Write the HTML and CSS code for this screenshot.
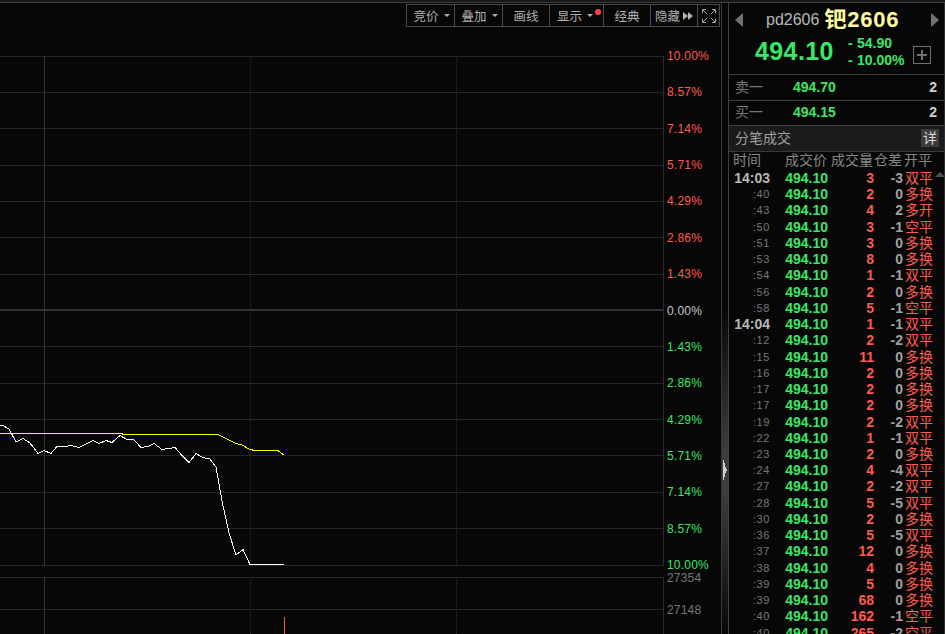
FILE: index.html
```html
<!DOCTYPE html>
<html lang="zh-CN">
<head>
  <meta charset="utf-8">
  <title>钯2606</title>
  <link rel="stylesheet" href="styles.css">
</head>
<body>

  <div class="topbar"></div>

  <div class="main">
    <div class="chart">
      <div class="toolbar">
        <div class="tool w48">竞价<i class="down"></i></div>
        <div class="tool w48">叠加<i class="down"></i></div>
        <div class="tool w47">画线</div>
        <div class="tool w54 show">显示<i class="down"></i><i class="dot"></i></div>
        <div class="tool w47">经典</div>
        <div class="tool w47 hide">隐藏<svg width="10" height="8"><path d="M0 0L5 4L0 8ZM5 0L10 4L5 8Z" fill="#b4b4b4"/></svg></div>
        <div class="tool w22">
          <svg width="14" height="14" fill="none" stroke="#a8a8a8">
            <path d="M.5 4V.5H4M10 .5H13.5V4M13.5 10V13.5H10M4 13.5H.5V10M1 1L5 5M13 1L9 5M13 13L9 9M1 13L5 9"/>
          </svg>
        </div>
      </div>

      <div class="plot">
        <svg id="grid" width="664" height="578" viewBox="0 56 664 578" shape-rendering="crispEdges"></svg>
        <div class="axis">
          <div class="price-axis" id="prices"></div>
          <div class="volume-axis">
            <div>27354</div>
            <div>27148</div>
          </div>
        </div>
      </div>
    </div>

    <div class="splitter">
      <svg width="4" height="20" shape-rendering="crispEdges"><path d="M0 0H1V3H2V7H3V9H4V11H3V13H2V17H1V20H0Z" fill="#d0d0d0"/></svg>
    </div>

    <div class="panel">
      <div class="quote">
        <div class="title">
          <i class="prev"></i>
          <span class="code">pd2606</span>
          <span class="name">钯2606</span>
          <i class="next"></i>
        </div>
        <div class="last">
          <span class="price">494.10</span>
          <div class="change">
            <div><b>-</b>54.90</div>
            <div><b>-</b>10.00%</div>
          </div>
          <div class="add"></div>
        </div>
      </div>
      <div class="order"><span>卖一</span><b class="green">494.70</b><b class="qty">2</b></div>
      <div class="order second"><span>买一</span><b class="green">494.15</b><b class="qty">2</b></div>
      <div class="tab"><span>分笔成交</span><span class="detail">详</span></div>
      <div class="head"><span>时间</span><span>成交价</span><span>成交量</span><span>仓差</span><span>开平</span><i class="up"></i></div>
      <div id="ticks"></div>
    </div>
  </div>

  <script src="script.js"></script>
</body>
</html>
```
FILE: styles.css
```css
* { box-sizing: border-box; margin: 0; padding: 0; }

body {
  width: 945px;
  height: 634px;
  overflow: hidden;
  background: #070707;
  color: #a0a0a0;
  font-family: "Liberation Sans", "Noto Sans CJK SC", sans-serif;
  font-size: 14px;
}

i, svg { display: block; flex: none; }

.topbar {
  height: 3px;
  background: #181818;
  border-bottom: 1px solid #404040;
}

.main {
  display: grid;
  grid-template-columns: 721px 8px 216px;
  height: 631px;
}

/* chart */
.chart { overflow: hidden; }

.toolbar {
  display: flex;
  width: 314px;
  height: 23px;
  margin: 1px 0 29px 406px;
  border: 1px solid #4a4a4a;
}

.tool {
  display: flex;
  align-items: center;
  justify-content: center;
  flex: none;
  gap: 5px;
  border-right: 1px solid #4a4a4a;
  color: #b0b0b0;
  font-size: 12.5px;
  position: relative;
}

.tool:last-child { border-right: 0; }
.w48 { width: 48px; padding-left: 2px; }
.w47 { width: 47px; }
.w54 { width: 54px; }
.w22 { width: 21px; }
.hide { gap: 3px; }
.show { padding-right: 3px; }

.down {
  border: 3px solid transparent;
  border-top-color: #b0b0b0;
  border-bottom: 0;
  margin-top: -1px;
}

.dot {
  position: absolute;
  right: 2px;
  top: 4px;
  width: 6px;
  height: 6px;
  border-radius: 50%;
  background: #ff4040;
}

.plot { display: flex; }

.axis {
  padding-left: 3px;
  font-size: 12px;
  letter-spacing: 0.2px;
}

.price-axis { height: 521px; }
.price-axis div { height: 36.36px; line-height: 1px; }
.price-axis div:last-child { height: 0; }

.volume-axis { color: #777; padding-top: 1px; }
.volume-axis div { height: 32px; line-height: 0; }

.red { color: #ff5a50; }
.zero { color: #c8c8c8; }
.green { color: #39e668; }

/* splitter between chart and quote panel */
.splitter {
  display: flex;
  align-items: center;
  padding: 303px 0 0 1px;
  border-left: 1px solid #383838;
  border-right: 1px solid #404040;
  background: linear-gradient(#070707 48%, #3c3c3c 70%, #3c3c3c 78%, #070707 100%);
}

/* quote panel */
.panel {
  overflow: hidden;
  border-right: 1px solid #303030;
}

.quote { height: 72px; border-bottom: 1px solid #404040; }

.title {
  display: flex;
  align-items: center;
  height: 34px;
  padding: 0 5px 0 6px;
}

.prev, .next { border: 7px solid transparent; }
.prev { border-right: 8px solid #707070; border-left: 0; }
.next { border-left: 8px solid #707070; border-right: 0; margin-left: auto; }

.code { margin-left: 23px; color: #b8b8b8; font-size: 16px; }

.name {
  margin-left: 5px;
  color: #ffffa0;
  font-size: 22px;
  font-weight: bold;
  letter-spacing: 0.8px;
  line-height: 32px;
}

.last { display: flex; height: 34px; }

.price {
  width: 94px;
  padding-left: 26px;
  color: #39e668;
  font-size: 25px;
  font-weight: bold;
  letter-spacing: 0.4px;
  line-height: 28px;
}

.change {
  width: 66px;
  margin: -2px 0 0 25px;
  color: #39e668;
  font-weight: bold;
  line-height: 17px;
}

.change b { display: inline-block; width: 9px; }

.add {
  width: 18px;
  height: 18px;
  margin: 9px 0 0 -1px;
  border: 1px solid #707070;
  background:
    linear-gradient(#707070, #707070) center / 10px 2px no-repeat,
    linear-gradient(#707070, #707070) center / 2px 10px no-repeat;
}

.order {
  display: grid;
  grid-template-columns: 58px 80px 1fr;
  height: 26px;
  padding: 0 7px 0 6px;
  border-bottom: 1px solid #404040;
  line-height: 25px;
}

.second { height: 25px; line-height: 23px; }
.order span { color: #777; }
.qty { text-align: right; color: #d0d0d0; }

.tab {
  display: flex;
  align-items: center;
  justify-content: space-between;
  height: 26px;
  padding: 0 5px 0 6px;
  border-bottom: 1px solid #383838;
  background: #1b1b1b;
  line-height: 18px;
}

.tab span { margin-bottom: 1px; }

.detail {
  width: 18px;
  height: 18px;
  overflow: hidden;
  background: #3c3c3c;
  color: #d8d8d8;
  line-height: 18px;
  text-align: center;
}

.head {
  display: grid;
  grid-template-columns: 52px 46px 43px 30px 28px;
  height: 18px;
  padding-left: 4px;
  color: #888;
  line-height: 16px;
  white-space: nowrap;
  position: relative;
}

.up {
  position: absolute;
  left: 206px;
  top: 20px;
  border: 5px solid transparent;
  border-bottom-color: #505050;
  border-top: 0;
}

.tick {
  display: grid;
  grid-template-columns: 41px 58px 46px 29px 30px;
  height: 16.24px;
  line-height: 16px;
  text-align: right;
  font-weight: bold;
  white-space: nowrap;
}

.sec {
  color: #777;
  font-size: 11px;
  font-weight: normal;
  letter-spacing: 0.6px;
}
.min { color: #b8b8b8; }
.kind { font-weight: normal; }
```
FILE: script.js
```js
// percent scale, top to bottom
const levels = ["10.00", "8.57", "7.14", "5.71", "4.29", "2.86", "1.43", "0.00",
  "1.43", "2.86", "4.29", "5.71", "7.14", "8.57", "10.00"];

document.getElementById("prices").innerHTML = levels.map((v, i) => {
  const cls = i < 7 ? "red" : i > 7 ? "green" : "zero";
  return `<div class="${cls}">${v}%</div>`;
}).join("");

// grid lines
const rows = [56, 92, 128, 165, 201, 237, 274, 310, 346, 383, 419, 455, 492, 528, 565, 577, 609];
let svg = "";
rows.forEach(y => {
  svg += `<path d="M0 ${y + 0.5}H664" stroke="#262626"/>`;
});
svg += `<path d="M0 310H664" stroke="#323232" stroke-width="2"/>`;
svg += `<path d="M44.5 56V566M44.5 577V634" stroke="#343434"/>`;
svg += `<path d="M250.5 58V565M250.5 579V634M456.5 58V565M456.5 579V634" stroke="#2a2a2a" stroke-dasharray="1 1"/>`;
svg += `<path d="M663.5 56V566M663.5 577V634" stroke="#2c2c2c"/>`;

const price = "0,426 3,425.5 9,429 16,442 23,438.5 30,443 38,453.5 44,450.5 51,453.5 57,446.5 65,446.5 71,445.5 79,447.5 93,440.5 99,443.5 106,440.5 112,442.5 120,435.5 127,439.5 134,440 141,447.5 148,446.5 154,443.5 162,449.5 175,447.5 182,455.5 189,462.5 196,453.5 203,457.5 210,459 216,467 222,501 229,533 236,555 243,549.5 250,564.5 284,564.5";
const average = "0,433.5 122,433.5 123,434.5 218,434.5 236,443.5 242,445 250,449.5 255,450.5 278,450.5 284,455";
svg += `<polyline points="${average}" fill="none" stroke="#ffff00"/>`;
svg += `<polyline points="${price}" fill="none" stroke="#ffffff"/>`;
svg += `<path d="M284.5 617V634" stroke="#ff5a50"/>`;
document.getElementById("grid").innerHTML = svg;

// time, volume, position change, type
const ticks = [
  ["14:03", 3, -3, "双平"],
  [":40", 2, 0, "多换"],
  [":43", 4, 2, "多开"],
  [":50", 3, -1, "空平"],
  [":51", 3, 0, "多换"],
  [":53", 8, 0, "多换"],
  [":54", 1, -1, "双平"],
  [":56", 2, 0, "多换"],
  [":58", 5, -1, "空平"],
  ["14:04", 1, -1, "双平"],
  [":12", 2, -2, "双平"],
  [":15", 11, 0, "多换"],
  [":16", 2, 0, "多换"],
  [":17", 2, 0, "多换"],
  [":17", 2, 0, "多换"],
  [":19", 2, -2, "双平"],
  [":22", 1, -1, "双平"],
  [":23", 2, 0, "多换"],
  [":24", 4, -4, "双平"],
  [":27", 2, -2, "双平"],
  [":28", 5, -5, "双平"],
  [":30", 2, 0, "多换"],
  [":36", 5, -5, "双平"],
  [":37", 12, 0, "多换"],
  [":38", 4, 0, "多换"],
  [":39", 5, 0, "多换"],
  [":39", 68, 0, "多换"],
  [":40", 162, -1, "空平"],
  [":40", 265, -2, "空平"]
];

document.getElementById("ticks").innerHTML = ticks.map(t => `
  <div class="tick">
    <span class="${t[0].length > 3 ? "min" : "sec"}">${t[0]}</span>
    <span class="green">494.10</span>
    <span class="red">${t[1]}</span>
    <span>${t[2]}</span>
    <span class="red kind">${t[3]}</span>
  </div>`).join("");
```
